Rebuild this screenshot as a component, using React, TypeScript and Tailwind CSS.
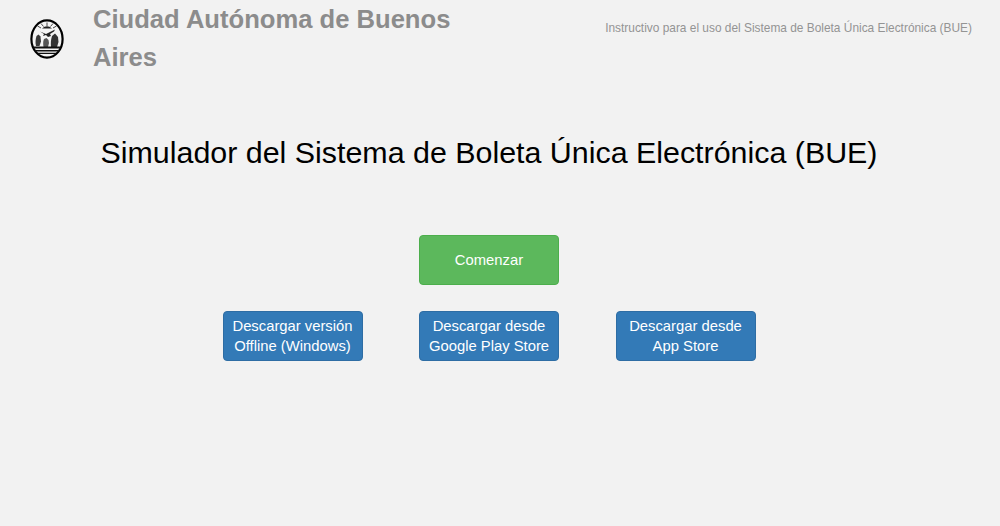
const sans = "font-['Liberation_Sans',Arial,sans-serif]";

function Logo() {
  return (
    <svg width="34" height="40" viewBox="0 0 34 40" className="mt-[2px] shrink-0">
      <ellipse cx="17" cy="20" rx="15.6" ry="18.6" fill="#f4f4f4" stroke="#000" strokeWidth="2.2" />
      {/* sun and rays */}
      <path d="M12 9.5Q17 5 22 9.5Z" fill="#222" />
      <g stroke="#333" strokeWidth="0.9">
        <path d="M17 7V3.5M13.5 7.5 11 4.5M20.5 7.5 23 4.5M11 9 7.5 7M23 9 26.5 7" />
      </g>
      {/* branch and pike */}
      <path d="M10 12.5 16 15l9-4.5-1 2-4 2.5 1 2-3 1-2-2-3 1 1-2Z" fill="#222" />
      {/* trees */}
      <path d="M6 27c-.8-3-.5-7 .5-10l2-1.5 2 2 .5 5-1.500 4.500Z" fill="#3a3a3a" />
      <path d="M13.500 28c-.5-3-.5-6 .5-8l2.500-1 2 2 .5 3-1 4Z" fill="#555" />
      <path d="M21 28c-.5-4 0-8 1-11l3-2.500 3 3.500.5 5-1.500 5Z" fill="#333" />
      {/* water */}
      <path d="M3.500 27.500h27v1.900h-27ZM5 31h24v1.500H5ZM8 33.700h18v1.300H8Z" fill="#111" />
    </svg>
  );
}

function ActionButton({ color, children }: { color: "green" | "blue"; children: React.ReactNode }) {
  return (
    <a
      className={
        color === "green"
          ? "flex h-[50px] w-[140px] items-center justify-center rounded border border-[#4cae4c] bg-[#5cb85c] text-[14.8px] leading-[20px] text-white"
          : "flex h-[50px] w-[140px] items-center justify-center rounded border border-[#2e6da4] bg-[#337ab7] text-center text-[14.8px] leading-[20px] text-white"
      }
    >
      {children}
    </a>
  );
}

export default function App() {
  return (
    <div className={`${sans} min-h-[526px] bg-[#f2f2f2]`}>
      {/* Header */}
      <header className="flex items-center justify-between pl-[30px] pr-[28px]">
        <div className="flex items-center">
          <Logo />
          <h2 className="ml-[29px] w-[400px] text-[25.6px] font-bold leading-[38px] text-[#8c8c8c]">
            Ciudad Autónoma de Buenos Aires
          </h2>
        </div>
        <a className="mt-[21px] self-start text-[11.9px] leading-[14px] text-[#949494]">
          Instructivo para el uso del Sistema de Boleta Única Electrónica (BUE)
        </a>
      </header>

      <div className="pr-[22px]">
        <h1 className="mt-[53px] text-center text-[30.4px] leading-[46px] text-black">
          Simulador del Sistema de Boleta Única Electrónica (BUE)
        </h1>

        {/* Actions */}
        <main className="mt-[60px] flex flex-col items-center gap-[26px]">
          <ActionButton color="green">Comenzar</ActionButton>
          <div className="flex gap-[56.5px]">
            <ActionButton color="blue">
              Descargar versión
              <br />
              Offline (Windows)
            </ActionButton>
            <ActionButton color="blue">
              Descargar desde
              <br />
              Google Play Store
            </ActionButton>
            <ActionButton color="blue">
              Descargar desde
              <br />
              App Store
            </ActionButton>
          </div>
        </main>
      </div>
    </div>
  );
}
